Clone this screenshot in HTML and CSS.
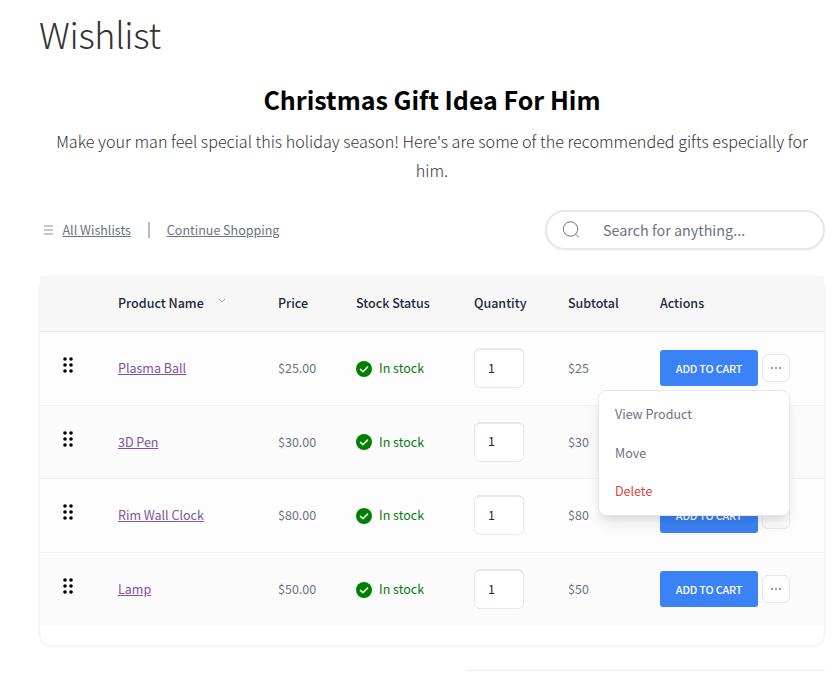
FILE: index.html
```html
<!DOCTYPE html>
<html lang="en">
<head>
    <meta charset="utf-8">
    <title>Wishlist</title>
    <link rel="stylesheet" href="styles.css">
</head>
<body>

<svg class="sprite" width="0" height="0">
    <symbol id="check" viewBox="0 0 16 16">
        <circle cx="8" cy="8" r="8" fill="#008000"/>
        <path d="M4.5 8.4l2.4 2.3 4.6-4.6" fill="none" stroke="#fff" stroke-width="1.5" stroke-linecap="round" stroke-linejoin="round"/>
    </symbol>
    <symbol id="grip" viewBox="0 0 10 16">
        <circle cx="2" cy="2" r="1.8"/><circle cx="8" cy="2" r="1.8"/>
        <circle cx="2" cy="8" r="1.8"/><circle cx="8" cy="8" r="1.8"/>
        <circle cx="2" cy="14" r="1.8"/><circle cx="8" cy="14" r="1.8"/>
    </symbol>
    <symbol id="dots" viewBox="0 0 12 4">
        <circle cx="2" cy="2" r="1.2"/><circle cx="6" cy="2" r="1.2"/><circle cx="10" cy="2" r="1.2"/>
    </symbol>
</svg>

<div class="page">
    <h1>Wishlist</h1>
    <h2>Christmas Gift Idea For Him</h2>
    <p class="description">Make your man feel special this holiday season! Here's are some of the recommended gifts especially for him.</p>

    <div class="toolbar">
        <div class="links">
            <svg class="list-icon" width="10" height="10" viewBox="0 0 10 10"><path d="M0 1h9M0 5h9M0 9h9" stroke="#c6c8cb" stroke-width="2"/></svg>
            <a href="#">All Wishlists</a>
            <span class="divider"></span>
            <a href="#">Continue Shopping</a>
        </div>
        <label class="search">
            <svg width="18" height="18" viewBox="0 0 18 18" fill="none" stroke="#6b7280"><circle cx="8.5" cy="8" r="7.2"/><path d="M13.5 13l3.3 3.2"/></svg>
            <input type="text" placeholder="Search for anything...">
        </label>
    </div>

    <div class="card">
        <table>
            <colgroup>
                <col class="col-grip"><col class="col-name"><col class="col-price"><col class="col-stock">
                <col class="col-qty"><col class="col-subtotal"><col class="col-actions">
            </colgroup>
            <thead>
                <tr>
                    <th></th>
                    <th>Product Name<svg class="sort" width="8" height="5" viewBox="0 0 8 5"><path d="M.6.6L4 4 7.4.6" fill="none" stroke="#a3a7ae"/></svg></th>
                    <th>Price</th>
                    <th>Stock Status</th>
                    <th>Quantity</th>
                    <th>Subtotal</th>
                    <th>Actions</th>
                </tr>
            </thead>
            <tbody>
                <tr>
                    <td><svg class="grip"><use href="#grip"/></svg></td>
                    <td><a href="#">Plasma Ball</a></td>
                    <td>$25.00</td>
                    <td><span class="stock"><svg><use href="#check"/></svg>In stock</span></td>
                    <td><input class="qty" type="text" value="1"></td>
                    <td>$25</td>
                    <td>
                        <div class="actions">
                            <button class="add">ADD TO CART</button>
                            <button class="more"><svg><use href="#dots"/></svg></button>
                            <div class="menu">
                                <a href="#">View Product</a>
                                <a href="#">Move</a>
                                <a href="#" class="delete">Delete</a>
                            </div>
                        </div>
                    </td>
                </tr>
                <tr>
                    <td><svg class="grip"><use href="#grip"/></svg></td>
                    <td><a href="#">3D Pen</a></td>
                    <td>$30.00</td>
                    <td><span class="stock"><svg><use href="#check"/></svg>In stock</span></td>
                    <td><input class="qty" type="text" value="1"></td>
                    <td>$30</td>
                    <td>
                        <div class="actions">
                            <button class="add">ADD TO CART</button>
                            <button class="more"><svg><use href="#dots"/></svg></button>
                        </div>
                    </td>
                </tr>
                <tr>
                    <td><svg class="grip"><use href="#grip"/></svg></td>
                    <td><a href="#">Rim Wall Clock</a></td>
                    <td>$80.00</td>
                    <td><span class="stock"><svg><use href="#check"/></svg>In stock</span></td>
                    <td><input class="qty" type="text" value="1"></td>
                    <td>$80</td>
                    <td>
                        <div class="actions">
                            <button class="add">ADD TO CART</button>
                            <button class="more"><svg><use href="#dots"/></svg></button>
                        </div>
                    </td>
                </tr>
                <tr>
                    <td><svg class="grip"><use href="#grip"/></svg></td>
                    <td><a href="#">Lamp</a></td>
                    <td>$50.00</td>
                    <td><span class="stock"><svg><use href="#check"/></svg>In stock</span></td>
                    <td><input class="qty" type="text" value="1"></td>
                    <td>$50</td>
                    <td>
                        <div class="actions">
                            <button class="add">ADD TO CART</button>
                            <button class="more"><svg><use href="#dots"/></svg></button>
                        </div>
                    </td>
                </tr>
            </tbody>
        </table>
    </div>

    <div class="totals"></div>
</div>

</body>
</html>
```

FILE: styles.css
```css
* { box-sizing: border-box; }
body { margin: 0; background: #fff; color: #6b7280; font-family: "Source Sans Pro", "Noto Sans CJK SC", sans-serif; font-size: 12.5px; line-height: 20px; overflow: hidden; }
input, button { font: inherit; }
.sprite { position: absolute; }
.page { width: 786px; margin-left: 39px; }

h1 { margin: 0; padding-top: 8px; font-size: 36px; font-weight: 300; line-height: 50px; letter-spacing: -.35px; color: #333; }
h2 { margin: 23px 0 0; font-size: 25px; font-weight: 700; line-height: 36px; color: #000; text-align: center; }
.description { margin: 10px 0 0; padding: 0 10px; font-size: 16.15px; font-weight: 300; line-height: 29px; color: #333; text-align: center; }

.toolbar { display: flex; justify-content: space-between; align-items: center; height: 40px; margin-top: 25px; }
.links { display: flex; align-items: center; padding-left: 5px; }
.links a { color: #6b7280; }
.list-icon { margin-right: 8.5px; }
.divider { width: 2px; height: 16px; margin: 0 17px; background: #bbb; }
.search { display: flex; align-items: center; width: 280px; height: 40px; padding-left: 15px; border: 2px solid #e5e7eb; border-radius: 20px; box-shadow: 0 1px 2px rgba(0, 0, 0, .05); }
.search input { width: 200px; margin-left: 23px; padding: 0; border: 0; outline: 0; background: none; font-size: 14.35px; }
.search input::placeholder { color: #6b7280; opacity: 1; }

.card { height: 371px; margin-top: 25px; padding: 1px; border-radius: 12px; box-shadow: inset 0 0 0 1px #f3f3f4, 0 1px 2px rgba(0, 0, 0, .06); }
table { width: 784px; table-layout: fixed; border-collapse: separate; border-spacing: 0; }
.col-grip { width: 62px; }
.col-name { width: 160px; }
.col-price { width: 78px; }
.col-stock { width: 118px; }
.col-qty { width: 94px; }
.col-subtotal { width: 92px; }
.col-actions { width: 180px; }
th, td { padding: 0 0 0 16px; text-align: left; vertical-align: middle; }
th { height: 56px; padding-bottom: 2px; background: #f7f7f7; border-bottom: 1px solid #e5e7eb; color: #1f2937; font-weight: 500; white-space: nowrap; }
td { height: 73.5px; background: #fdfdfd; border-bottom: 1px solid #f1f1f2; }
tr:nth-child(even) td { background: #fbfbfb; }
tr:last-child td { height: 73px; border-bottom: 0; }
td a { color: #7a56a0; }
.sort { margin-left: 14px; vertical-align: 5px; }
.grip { display: block; width: 10px; height: 16px; margin: -6px 0 0 7px; fill: #000; }
.stock { display: flex; align-items: center; color: #0a7a14; }
.stock svg { width: 16px; height: 16px; margin: 1px 7px 0 0; }
.qty { display: block; width: 50px; height: 40px; padding: 0 0 3px 13px; border: 1px solid #e5e7eb; border-top-width: 2px; border-radius: 6px; background: #fff; color: #1f2937; }

.actions { position: relative; display: flex; align-items: center; gap: 4px; }
.add { width: 98px; height: 36px; padding: 0 0 1px; border: 0; border-radius: 3px; background: #3b82f6; color: #fff; font-size: 10.8px; font-weight: 500; letter-spacing: -.18px; }
.more { display: flex; align-items: center; justify-content: center; width: 28px; height: 28px; padding: 0; border: 1px solid #e5e7eb; border-radius: 6px; background: #fdfdfd; }
.more svg { width: 12px; height: 4px; fill: #9ca3af; }
.menu { position: absolute; z-index: 1; top: 40px; right: 34px; width: 192px; height: 126px; padding: 4px 0; border: 1px solid #e5e7eb; border-radius: 8px; background: #fff; box-shadow: 0 10px 15px -3px rgba(0, 0, 0, .1), 0 4px 6px -2px rgba(0, 0, 0, .06); }
.menu a { display: block; padding: 9px 16px; color: #6b7280; line-height: 20.5px; text-decoration: none; }
.menu .delete { color: #dc4444; }

.totals { width: 359px; margin: 24px 0 0 auto; border-top: 1px solid #ececee; }
```
